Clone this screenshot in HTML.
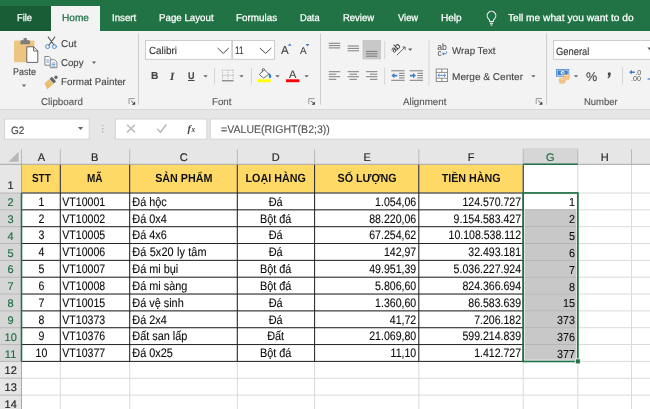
<!DOCTYPE html>
<html><head><meta charset="utf-8"><title>Excel</title>
<style>
html,body{margin:0;padding:0;}
body{width:650px;height:409px;overflow:hidden;position:relative;background:#e6e6e6;font-family:"Liberation Sans",sans-serif;}
.abs{position:absolute;}
.t{position:absolute;white-space:nowrap;color:#262626;line-height:1;z-index:3;-webkit-text-stroke:0.12px currentColor;}
.ui{font-size:10.5px;color:#262626;}
.cell{transform:rotate(0.03deg);position:absolute;white-space:nowrap;font-size:12.3px;color:#0c0c0c;-webkit-text-stroke:0.12px #0c0c0c;line-height:1;}
.hd{position:absolute;white-space:nowrap;font-size:11.8px;font-weight:bold;color:#111;text-align:center;line-height:1;}
.ch{transform:rotate(0.03deg);position:absolute;white-space:nowrap;font-size:11px;color:#222;-webkit-text-stroke:0.15px currentColor;text-align:center;line-height:1;}
.rh{transform:rotate(0.03deg);position:absolute;white-space:nowrap;font-size:11px;letter-spacing:0.2px;color:#222;-webkit-text-stroke:0.15px currentColor;text-align:center;line-height:1;}
svg{position:absolute;left:0;top:0;will-change:transform;}
</style></head><body>

<div class="abs" style="left:0;top:0;width:650px;height:31px;background:#217346"></div>
<div class="abs" style="left:0;top:30.8px;width:650px;height:77.8px;background:#f3f3f3"></div>
<div class="abs" style="left:0;top:108.6px;width:650px;height:1.1px;background:#d8d8d8"></div>
<div class="abs" style="left:0;top:5.6px;width:51px;height:25.4px;background:#185d36"></div>
<div class="abs" style="left:50.8px;top:5.6px;width:48.8px;height:26px;background:#f3f3f3"></div>
<svg width="650" height="150" viewBox="0 0 650 150">
<path d="M138.5 33.5 V104.8" stroke="#cdcdcd" stroke-width="1"/>
<path d="M320.5 33.5 V104.8" stroke="#cdcdcd" stroke-width="1"/>
<path d="M546.6 33.5 V104.8" stroke="#cdcdcd" stroke-width="1"/>
<path d="M214.5 68 V84.5" stroke="#d4d4d4" stroke-width="1"/>
<path d="M251.4 68 V84.5" stroke="#d4d4d4" stroke-width="1"/>
<path d="M384.7 67.5 V84.5" stroke="#d4d4d4" stroke-width="1"/>
<path d="M384.7 41 V59" stroke="#d4d4d4" stroke-width="1"/>
<path d="M429 40.5 V85" stroke="#d4d4d4" stroke-width="1"/>
<path d="M622.5 67 V84.5" stroke="#d4d4d4" stroke-width="1"/>
<rect x="14" y="40.5" width="20.5" height="21.8" rx="1.2" fill="#ecc583"/>
<path d="M20.5 44.2 v-3 q0 -1 1 -1 h2 v-1.2 q0 -1 1 -1 h1.4 q1 0 1 1 v1.2 h2 q1 0 1 1 v3 z" fill="#7d7d7d"/>
<path d="M26.8 46.8 h6.8 l4.2 4.2 v11.4 h-11 z" fill="#fff" stroke="#555" stroke-width="0.9"/>
<path d="M33.6 46.8 v4.2 h4.2" fill="none" stroke="#555" stroke-width="0.9"/>
<path d="M21.8 84.6 h4.4 l-2.2 2.4 z" fill="#666"/>
<g fill="none" stroke-linecap="round"><path d="M48.2 37 L54 45 M54.8 37 L49 45" stroke="#5c5c5c" stroke-width="1.2"/><circle cx="47.6" cy="46.6" r="2" stroke="#4a8ad0" stroke-width="0.95"/><circle cx="54.4" cy="46.6" r="2" stroke="#4a8ad0" stroke-width="0.95"/></g>
<g fill="#fff" stroke="#6e6e6e" stroke-width="0.85"><path d="M44.9 56.5 h4 l1.8 1.8 v6.9 h-5.8 z"/><path d="M50.2 59.8 h4.4 l2.3 2.3 v5.6 h-6.7 z"/></g>
<path d="M46.2 60 h2.8 M46.2 62 h2.8 M51.6 63 h3.8 M51.6 64.6 h3.8 M51.6 66.1 h3.8" stroke="#4a8ad0" stroke-width="0.8"/>
<path d="M91.8 61.6 h4.4 l-2.2 2.4 z" fill="#666"/>
<g transform="translate(46.5 85.8) rotate(-42)"><path d="M0.4 -3.2 L6.2 -3.2 L6.2 3.2 L-2 3.2 Z" fill="#ecbd6c"/><rect x="6.7" y="-3.1" width="3.3" height="6.2" rx="0.4" fill="#666"/><rect x="11.2" y="-1.5" width="3" height="3" rx="0.4" fill="#666"/></g>
<path d="M129.0 103.9 V98.6 H134.6" fill="none" stroke="#8c8c8c" stroke-width="0.9"/>
<path d="M131.2 100.8 L133.6 103.2" stroke="#3a3a3a" stroke-width="0.9"/>
<path d="M135.1 104.8 v-3.3 l-3.3 3.3 z" fill="#3a3a3a"/>
<rect x="145.5" y="40.5" width="86.3" height="18.8" fill="#fff" stroke="#c8c8c8" stroke-width="0.9"/>
<rect x="232.6" y="40.5" width="42" height="18.8" fill="#fff" stroke="#c8c8c8" stroke-width="0.9"/>
<path d="M217.6 48 l5.6 5.4 l5.6 -5.4 M259.8 48 l5.8 5.4 l5.8 -5.4" fill="none" stroke="#484848" stroke-width="1"/>
<path d="M287.8 45.8 l1.9 -2.4 l1.9 2.4 z" fill="#3c7bc8"/>
<path d="M305.6 44 l1.9 2.4 l1.9 -2.4 z" fill="#3c7bc8"/>
<path d="M203.3 75.2 h4.4 l-2.2 2.4 z" fill="#666"/>
<g stroke="#9a9a9a" stroke-width="0.8" stroke-dasharray="0.9 1.1" fill="none"><path d="M222.4 70.2 h11 M222.4 75.3 h11 M222.6 70.2 v10 M227.9 70.2 v10 M233.2 70.2 v10"/></g>
<path d="M222 80.8 h11.6" stroke="#555" stroke-width="0.9"/>
<path d="M239.3 75.2 h4.4 l-2.2 2.4 z" fill="#666"/>
<g fill="none" stroke="#555" stroke-width="0.85" stroke-linejoin="round"><path d="M259.3 74.5 L264.4 69.9 L268.9 74.2 L263.6 78.1 Z" fill="#fff"/><path d="M262.3 71.8 v-1.8 q0 -1.5 1.1 -1.5 q1.1 0 1.1 1.5 v0.4"/></g>
<path d="M268.4 72.4 q3 1.8 2.8 4.6 q-0.2 1.2 -1.2 1.2 q-1 0 -1 -1.2 q0 -1.4 -.6 -4.6z" fill="#3c7bc8"/>
<rect x="257.4" y="79.3" width="13.4" height="2.9" fill="#ffff00"/>
<path d="M275.3 75.2 h4.4 l-2.2 2.4 z" fill="#666"/>
<rect x="286" y="79.3" width="13.4" height="2.9" fill="#ff0000"/>
<path d="M304.4 75.2 h4.4 l-2.2 2.4 z" fill="#666"/>
<path d="M308.79999999999995 103.9 V98.6 H314.4" fill="none" stroke="#8c8c8c" stroke-width="0.9"/>
<path d="M311.0 100.8 L313.4 103.2" stroke="#3a3a3a" stroke-width="0.9"/>
<path d="M314.9 104.8 v-3.3 l-3.3 3.3 z" fill="#3a3a3a"/>
<rect x="362.5" y="40" width="18.5" height="19.4" fill="#c8c8c8"/>
<path d="M328.8 43.3 h11.4 M328.8 45.6 h11.4 M328.8 47.9 h11.4" stroke="#707070" stroke-width="0.9" fill="none"/>
<path d="M347.6 46 h11.4 M347.6 48.4 h11.4 M347.6 50.8 h11.4" stroke="#707070" stroke-width="0.9" fill="none"/>
<path d="M366 51.4 h11.4 M366 53.8 h11.4 M366 56.2 h11.4" stroke="#707070" stroke-width="0.9" fill="none"/>
<path d="M328.8 71.7 h11.4 M328.8 74.2 h7.5 M328.8 76.7 h11.4 M328.8 79.3 h7.5" stroke="#707070" stroke-width="0.9" fill="none"/>
<path d="M347.6 71.7 h11.4 M349.55 74.2 h7.5 M347.6 76.7 h11.4 M349.55 79.3 h7.5" stroke="#707070" stroke-width="0.9" fill="none"/>
<path d="M366.0 71.7 h11.4 M369.9 74.2 h7.5 M366.0 76.7 h11.4 M369.9 79.3 h7.5" stroke="#707070" stroke-width="0.9" fill="none"/>
<g transform="translate(395.6 48.4) rotate(-45)"><text x="-4.6" y="2.4" font-family="Liberation Sans" font-size="8.8" fill="#333" stroke="#333" stroke-width="0.15">ab</text></g>
<path d="M396.8 55.2 L405 47.2 M405.2 47 h-2.8 M405.2 47 v2.8" stroke="#555" stroke-width="0.85" fill="none"/>
<path d="M408.0 48.6 h4.4 l-2.2 2.4 z" fill="#666"/>
<path d="M391.2 70.8 h13.4 M399.0 73.3 h5.6 M399.0 75.6 h5.6 M399.0 77.9 h5.6 M391.2 80.3 h13.4" stroke="#707070" stroke-width="0.9" fill="none"/>
<path d="M391.4 75.6 l2.9 -2.7 v1.9 h3 v1.6 h-3 v1.9 z" fill="#3c7bc8"/>
<path d="M409.6 70.8 h13.4 M417.4 73.3 h5.6 M417.4 75.6 h5.6 M417.4 77.9 h5.6 M409.6 80.3 h13.4" stroke="#707070" stroke-width="0.9" fill="none"/>
<path d="M415.9 75.6 l-2.9 -2.7 v1.9 h-3 v1.6 h3 v1.9 z" fill="#3c7bc8"/>
<text x="437.2" y="49.6" font-family="Liberation Sans" font-size="8.8" fill="#444" textLength="9.6" lengthAdjust="spacingAndGlyphs">ab</text>
<text x="437.4" y="55.6" font-family="Liberation Sans" font-size="8.4" fill="#444">c</text>
<path d="M446.6 51.4 v1 q0 1.4 -1.4 1.4 h-1.6" fill="none" stroke="#3c7bc8" stroke-width="0.9"/><path d="M442 53.8 l1.9 -1.6 v3.2 z" fill="#3c7bc8"/>
<g fill="#fff" stroke="#7a7a7a" stroke-width="0.85"><rect x="436.2" y="69" width="11.2" height="12.6"/><path d="M436.2 72.4 h11.2 M436.2 78.2 h11.2 M441.8 69 v3.4 M441.8 78.2 v3.4" fill="none"/></g>
<path d="M438 75.3 h7.6 M439.5 73.8 l-1.6 1.5 l1.6 1.5 M444.1 73.8 l1.6 1.5 l-1.6 1.5" stroke="#3c7bc8" stroke-width="0.9" fill="none"/>
<path d="M531.2 75.2 h4.4 l-2.2 2.4 z" fill="#666"/>
<path d="M536.1999999999999 103.9 V98.6 H541.8" fill="none" stroke="#8c8c8c" stroke-width="0.9"/>
<path d="M538.4 100.8 L540.8 103.2" stroke="#3a3a3a" stroke-width="0.9"/>
<path d="M542.3 104.8 v-3.3 l-3.3 3.3 z" fill="#3a3a3a"/>
<rect x="553.6" y="40.5" width="100" height="18.8" fill="#fff" stroke="#c8c8c8" stroke-width="0.9"/>
<path d="M647.4 47.6 h4.4 l-2.2 2.4 z" fill="#555"/>
<rect x="556" y="69" width="13.2" height="7.6" fill="#3f7fcf"/><rect x="557.1" y="70.1" width="11" height="5.4" fill="none" stroke="#fff" stroke-width="0.6"/><ellipse cx="562.6" cy="72.8" rx="2" ry="1.7" fill="#fff"/><circle cx="562.9" cy="72.8" r="0.9" fill="#3f7fcf"/>
<g fill="#f9d9a8" stroke="#eca458" stroke-width="0.55"><ellipse cx="566.4" cy="78.6" rx="3.2" ry="1.15"/><ellipse cx="566.4" cy="77.1" rx="3.2" ry="1.15"/><ellipse cx="566.4" cy="75.6" rx="3.2" ry="1.15"/><ellipse cx="562.2" cy="82.2" rx="3.2" ry="1.15"/><ellipse cx="562.2" cy="80.7" rx="3.2" ry="1.15"/><ellipse cx="562.2" cy="79.2" rx="3.2" ry="1.15"/></g>
<path d="M573.8 75.2 h4.4 l-2.2 2.4 z" fill="#666"/>
<path d="M607.9 72.6 h2.7 v2.5 q0 2.3 -2.6 3.3 l-0.5 -0.8 q1.2 -0.7 1.3 -2 h-0.9 z" fill="#444"/>
<path d="M629.2 72.2 l2.6 -2.4 v1.7 h3 v1.4 h-3 v1.7 z" fill="#3c7bc8"/>
<text x="635.2" y="75.2" font-family="Liberation Sans" font-size="7.2" fill="#555">.0</text>
<text x="631" y="81" font-family="Liberation Sans" font-size="7.2" fill="#555">.00</text>
<path d="M647.6 79 h4" stroke="#3c7bc8" stroke-width="1.2"/>
<g fill="none" stroke="#fff" stroke-width="1.05"><path d="M489.8 21.5 q0 -1.6 -1.5 -2.9 a4.35 4.35 0 1 1 6.4 0 q-1.5 1.3 -1.5 2.9 z"/><path d="M489.9 23.3 h3.2 M490.4 24.9 h2.2"/></g>
<rect x="4.6" y="119" width="84.6" height="20.1" fill="#fff" stroke="#d0d0d0" stroke-width="0.9"/>
<rect x="115.3" y="119" width="91.6" height="20.1" fill="#fff" stroke="#d0d0d0" stroke-width="0.9"/>
<rect x="210.2" y="119" width="445" height="20.1" fill="#fff" stroke="#d0d0d0" stroke-width="0.9"/>
<path d="M77.9 127 h5.4 l-2.7 3 z" fill="#666"/>
<g fill="#a0a0a0"><circle cx="102.7" cy="125.6" r="0.7"/><circle cx="102.7" cy="128.8" r="0.7"/><circle cx="102.7" cy="132" r="0.7"/></g>
<path d="M127 124.8 l8 7.6 M135 124.8 l-8 7.6" stroke="#bcbcbc" stroke-width="1.5" fill="none"/>
<path d="M157.2 128.8 l3.2 3.4 l6 -7.8" stroke="#bcbcbc" stroke-width="1.6" fill="none"/>
<text x="187.6" y="132" font-family="Liberation Serif" font-style="italic" font-weight="bold" font-size="10.6" fill="#444">f</text><text x="191.4" y="132" font-family="Liberation Serif" font-style="italic" font-weight="bold" font-size="7.4" fill="#444">x</text>
</svg>
<svg width="650" height="409" viewBox="0 0 650 409">
<rect x="21.5" y="164.3" width="628.5" height="244.7" fill="#fff"/>
<rect x="0" y="148.2" width="650" height="16.100000000000023" fill="#e6e6e6"/>
<rect x="0" y="164.3" width="21.5" height="244.7" fill="#e6e6e6"/>
<rect x="21.5" y="164.3" width="501.70000000000005" height="28.69999999999999" fill="#ffd966"/>
<rect x="523.2" y="148.2" width="54.59999999999991" height="16.100000000000023" fill="#d6d6d6"/>
<rect x="0" y="193.0" width="21.5" height="168.39999999999998" fill="#d6d6d6"/>
<rect x="523.2" y="209.84" width="54.59999999999991" height="151.55999999999997" fill="#c8c8c8"/>
<path d="M21.5 164.3 V409 M60.3 164.3 V409 M129.7 164.3 V409 M237.3 164.3 V409 M314.6 164.3 V409 M418.8 164.3 V409 M523.2 164.3 V409 M577.8 164.3 V409 M631.5 164.3 V409 M21.5 193.0 H650 M21.5 209.84 H650 M21.5 226.68 H650 M21.5 243.51999999999998 H650 M21.5 260.36 H650 M21.5 277.2 H650 M21.5 294.03999999999996 H650 M21.5 310.88 H650 M21.5 327.72 H650 M21.5 344.56 H650 M21.5 361.4 H650 M21.5 378.24 H650 M21.5 395.08 H650 M21.5 411.91999999999996 H650" stroke="#dadada" stroke-width="1" fill="none"/>
<path d="M523.2 209.84 H577.8 M523.2 226.68 H577.8 M523.2 243.51999999999998 H577.8 M523.2 260.36 H577.8 M523.2 277.2 H577.8 M523.2 294.03999999999996 H577.8 M523.2 310.88 H577.8 M523.2 327.72 H577.8 M523.2 344.56 H577.8" stroke="#b2b2b2" stroke-width="1" fill="none"/>
<path d="M21.5 149.2 V164.3 M60.3 149.2 V164.3 M129.7 149.2 V164.3 M237.3 149.2 V164.3 M314.6 149.2 V164.3 M418.8 149.2 V164.3 M523.2 149.2 V164.3 M577.8 149.2 V164.3 M631.5 149.2 V164.3 M0 193.0 H21.5 M0 209.84 H21.5 M0 226.68 H21.5 M0 243.51999999999998 H21.5 M0 260.36 H21.5 M0 277.2 H21.5 M0 294.03999999999996 H21.5 M0 310.88 H21.5 M0 327.72 H21.5 M0 344.56 H21.5 M0 361.4 H21.5 M0 378.24 H21.5 M0 395.08 H21.5 M0 411.91999999999996 H21.5" stroke="#b8b8b8" stroke-width="1" fill="none"/>
<path d="M0 164.3 H650 M21.5 164.3 V409" stroke="#a8a8a8" stroke-width="1" fill="none"/>
<path d="M60.3 164.8 V361.4 M129.7 164.8 V361.4 M237.3 164.8 V361.4 M314.6 164.8 V361.4 M418.8 164.8 V361.4 M523.2 164.8 V361.4 M21.5 193.0 H523.2 M21.5 209.84 H523.2 M21.5 226.68 H523.2 M21.5 243.51999999999998 H523.2 M21.5 260.36 H523.2 M21.5 277.2 H523.2 M21.5 294.03999999999996 H523.2 M21.5 310.88 H523.2 M21.5 327.72 H523.2 M21.5 344.56 H523.2 M21.5 361.4 H523.2" stroke="#222" stroke-width="1" fill="none"/>
<path d="M21.5 193.0 V361.4" stroke="#217346" stroke-width="1.6" fill="none"/>
<path d="M523.2 164.3 H577.8" stroke="#217346" stroke-width="1.6" fill="none"/>
<rect x="523.2" y="193.0" width="54.59999999999991" height="168.39999999999998" fill="none" stroke="#217346" stroke-width="1.8"/>
<rect x="524.5" y="194.3" width="51.99999999999991" height="165.79999999999998" fill="none" stroke="#fff" stroke-opacity="0.75" stroke-width="0.8"/>
<rect x="575.3" y="358.9" width="5" height="5" fill="#217346" stroke="#fff" stroke-width="0.8"/>
<path d="M18.6 151.79999999999998 V161.70000000000002 H8.4 Z" fill="#b8b8b8"/>
</svg>
<div style="position:absolute;left:0;top:0;width:650px;height:409px;will-change:transform;z-index:5">
<div class="t" style="left:17px;top:13.23px;font-size:10px;color:#fff;transform-origin:0 50%;transform:rotate(0.03deg) scaleX(0.931);-webkit-text-stroke:0.25px currentColor;">File</div>
<div class="t" style="left:61.5px;top:13.23px;font-size:10px;color:#217346;transform-origin:0 50%;transform:rotate(0.03deg) scaleX(1.012);-webkit-text-stroke:0.25px currentColor;">Home</div>
<div class="t" style="left:111.9px;top:13.23px;font-size:10px;color:#fff;transform-origin:0 50%;transform:rotate(0.03deg) scaleX(0.972);-webkit-text-stroke:0.25px currentColor;">Insert</div>
<div class="t" style="left:159.2px;top:13.23px;font-size:10px;color:#fff;transform-origin:0 50%;transform:rotate(0.03deg) scaleX(0.972);-webkit-text-stroke:0.25px currentColor;">Page Layout</div>
<div class="t" style="left:236.2px;top:13.23px;font-size:10px;color:#fff;transform-origin:0 50%;transform:rotate(0.03deg) scaleX(0.986);-webkit-text-stroke:0.25px currentColor;">Formulas</div>
<div class="t" style="left:300.4px;top:13.23px;font-size:10px;color:#fff;transform-origin:0 50%;transform:rotate(0.03deg) scaleX(0.928);-webkit-text-stroke:0.25px currentColor;">Data</div>
<div class="t" style="left:343.3px;top:13.23px;font-size:10px;color:#fff;transform-origin:0 50%;transform:rotate(0.03deg) scaleX(0.945);-webkit-text-stroke:0.25px currentColor;">Review</div>
<div class="t" style="left:397.5px;top:13.23px;font-size:10px;color:#fff;transform-origin:0 50%;transform:rotate(0.03deg) scaleX(0.935);-webkit-text-stroke:0.25px currentColor;">View</div>
<div class="t" style="left:440.8px;top:13.23px;font-size:10px;color:#fff;transform-origin:0 50%;transform:rotate(0.03deg) scaleX(1.006);-webkit-text-stroke:0.25px currentColor;">Help</div>
<div class="t" style="left:508.2px;top:13.23px;font-size:10px;color:#fff;transform-origin:0 50%;transform:rotate(0.03deg) scaleX(1.018);-webkit-text-stroke:0.25px currentColor;">Tell me what you want to do</div>
<div class="t" style="left:13px;top:67.32px;font-size:9.9px;color:#444;transform-origin:0 50%;transform:rotate(0.03deg) scaleX(0.909);">Paste</div>
<div class="t" style="left:61px;top:38.82px;font-size:9.9px;color:#444;transform-origin:0 50%;transform:rotate(0.03deg) scaleX(1.006);">Cut</div>
<div class="t" style="left:61px;top:58.22px;font-size:9.9px;color:#444;transform-origin:0 50%;transform:rotate(0.03deg) scaleX(0.978);">Copy</div>
<div class="t" style="left:61px;top:77.22px;font-size:9.9px;color:#444;transform-origin:0 50%;transform:rotate(0.03deg) scaleX(0.993);">Format Painter</div>
<div class="t" style="left:41px;top:97.02px;font-size:9.9px;color:#555;transform-origin:0 50%;transform:rotate(0.03deg) scaleX(0.991);">Clipboard</div>
<div class="t" style="left:148.5px;top:45.6px;font-size:10.4px;color:#333;transform-origin:0 50%;transform:rotate(0.03deg) scaleX(0.947);">Calibri</div>
<div class="t" style="left:235.2px;top:45.26px;font-size:10.8px;color:#333;transform-origin:0 50%;transform:rotate(0.03deg) scaleX(0.749);">11</div>
<div class="t" style="left:211.5px;top:96.72px;font-size:9.9px;color:#555;transform-origin:0 50%;transform:rotate(0.03deg) scaleX(0.984);">Font</div>
<div class="t" style="left:451.6px;top:45.62px;font-size:9.9px;color:#444;transform-origin:0 50%;transform:rotate(0.03deg) scaleX(0.986);">Wrap Text</div>
<div class="t" style="left:451.6px;top:71.62px;font-size:9.9px;color:#444;transform-origin:0 50%;transform:rotate(0.03deg) scaleX(1.019);">Merge &amp; Center</div>
<div class="t" style="left:403.2px;top:97.02px;font-size:9.9px;color:#555;transform-origin:0 50%;transform:rotate(0.03deg) scaleX(0.988);">Alignment</div>
<div class="t" style="left:556.3px;top:45.61px;font-size:10.5px;color:#333;transform-origin:0 50%;transform:rotate(0.03deg) scaleX(0.891);">General</div>
<div class="t" style="left:584px;top:96.82px;font-size:9.9px;color:#555;transform-origin:0 50%;transform:rotate(0.03deg) scaleX(0.960);">Number</div>
<div class="t" style="left:150.8px;top:70.57px;font-size:10.2px;color:#444;transform-origin:0 50%;transform:rotate(0.03deg);font-weight:bold;">B</div>
<div class="t" style="left:170px;top:70.57px;font-size:10.2px;color:#444;transform-origin:0 50%;transform:rotate(0.03deg);font-style:italic;font-weight:bold;font-family:'Liberation Serif',serif;font-size:11px;">I</div>
<div class="t" style="left:187.9px;top:70.7px;font-size:9.8px;color:#444;transform-origin:0 50%;transform:rotate(0.03deg);font-weight:bold;text-decoration:underline;text-underline-offset:1px;text-decoration-thickness:0.9px;transform:rotate(0.03deg) scaleX(0.92);">U</div>
<div class="t" style="left:280.6px;top:44.87px;font-size:11.5px;color:#444;transform-origin:0 50%;transform:rotate(0.03deg);">A</div>
<div class="t" style="left:299.5px;top:46.22px;font-size:9.9px;color:#444;transform-origin:0 50%;transform:rotate(0.03deg);">A</div>
<div class="t" style="left:288.6px;top:69.49px;font-size:11px;color:#444;transform-origin:0 50%;transform:rotate(0.03deg);">A</div>
<div class="t" style="left:586.3px;top:70.93px;font-size:12.6px;color:#444;transform-origin:0 50%;transform:rotate(0.03deg);">%</div>
<div class="t" style="left:10.6px;top:124.63px;font-size:10.6px;color:#444;transform-origin:0 50%;transform:rotate(0.03deg) scaleX(0.948);">G2</div>
<div class="t" style="left:220.6px;top:124.12px;font-size:11.2px;color:#555;transform-origin:0 50%;transform:rotate(0.03deg) scaleX(0.946);">=VALUE(RIGHT(B2;3))</div>
<div class="ch" style="left:21.5px;width:38.8px;top:152.39999999999998px;color:#222">A</div>
<div class="ch" style="left:60.3px;width:69.39999999999999px;top:152.39999999999998px;color:#222">B</div>
<div class="ch" style="left:129.7px;width:107.60000000000002px;top:152.39999999999998px;color:#222">C</div>
<div class="ch" style="left:237.3px;width:77.30000000000001px;top:152.39999999999998px;color:#222">D</div>
<div class="ch" style="left:314.6px;width:104.19999999999999px;top:152.39999999999998px;color:#222">E</div>
<div class="ch" style="left:418.8px;width:104.40000000000003px;top:152.39999999999998px;color:#222">F</div>
<div class="ch" style="left:523.2px;width:54.59999999999991px;top:152.39999999999998px;color:#1e6e42">G</div>
<div class="ch" style="left:577.8px;width:53.700000000000045px;top:152.39999999999998px;color:#222">H</div>
<div class="rh" style="left:0;width:21.5px;top:180.2px;color:#222">1</div>
<div class="rh" style="left:0;width:21.5px;top:197.04px;color:#1e6e42">2</div>
<div class="rh" style="left:0;width:21.5px;top:213.88px;color:#1e6e42">3</div>
<div class="rh" style="left:0;width:21.5px;top:230.71999999999997px;color:#1e6e42">4</div>
<div class="rh" style="left:0;width:21.5px;top:247.56px;color:#1e6e42">5</div>
<div class="rh" style="left:0;width:21.5px;top:264.4px;color:#1e6e42">6</div>
<div class="rh" style="left:0;width:21.5px;top:281.23999999999995px;color:#1e6e42">7</div>
<div class="rh" style="left:0;width:21.5px;top:298.08px;color:#1e6e42">8</div>
<div class="rh" style="left:0;width:21.5px;top:314.92px;color:#1e6e42">9</div>
<div class="rh" style="left:0;width:21.5px;top:331.76px;color:#1e6e42">10</div>
<div class="rh" style="left:0;width:21.5px;top:348.59999999999997px;color:#1e6e42">11</div>
<div class="rh" style="left:0;width:21.5px;top:365.44px;color:#222">12</div>
<div class="rh" style="left:0;width:21.5px;top:382.28px;color:#222">13</div>
<div class="rh" style="left:0;width:21.5px;top:399.11999999999995px;color:#222">14</div>
<div class="hd" style="left:21.5px;width:38.8px;top:173.20000000000002px;transform:rotate(0.03deg) scaleX(0.85)">STT</div>
<div class="hd" style="left:60.3px;width:69.39999999999999px;top:173.20000000000002px;transform:rotate(0.03deg) scaleX(0.85)">MÃ</div>
<div class="hd" style="left:129.7px;width:107.60000000000002px;top:173.20000000000002px;transform:rotate(0.03deg) scaleX(0.91)">SẢN PHẨM</div>
<div class="hd" style="left:237.3px;width:77.30000000000001px;top:173.20000000000002px;transform:rotate(0.03deg) scaleX(0.91)">LOẠI HÀNG</div>
<div class="hd" style="left:314.6px;width:104.19999999999999px;top:173.20000000000002px;transform:rotate(0.03deg) scaleX(0.91)">SỐ LƯỢNG</div>
<div class="hd" style="left:418.8px;width:104.40000000000003px;top:173.20000000000002px;transform:rotate(0.03deg) scaleX(0.91)">TIỀN HÀNG</div>
<div class="cell" style="left:21.5px;width:38.8px;top:195.7px;text-align:center;box-sizing:border-box;transform-origin:50% 50%;transform:rotate(0.03deg) scaleX(0.858);">1</div>
<div class="cell" style="left:60.3px;width:69.4px;top:195.7px;text-align:left;box-sizing:border-box;padding-left:2.68px;transform-origin:0 50%;transform:rotate(0.03deg) scaleX(0.858);">VT10001</div>
<div class="cell" style="left:129.7px;width:107.6px;top:195.7px;text-align:left;box-sizing:border-box;padding-left:2.6px;transform-origin:0 50%;transform:rotate(0.03deg) scaleX(0.885);">Đá hộc</div>
<div class="cell" style="left:237.3px;width:77.3px;top:195.7px;text-align:center;box-sizing:border-box;transform-origin:50% 50%;transform:rotate(0.03deg) scaleX(0.885);">Đá</div>
<div class="cell" style="left:314.6px;width:104.2px;top:195.7px;text-align:right;box-sizing:border-box;padding-right:3.5px;transform-origin:100% 50%;transform:rotate(0.03deg) scaleX(0.858);">1.054,06</div>
<div class="cell" style="left:418.8px;width:104.4px;top:195.7px;text-align:right;box-sizing:border-box;padding-right:2.68px;transform-origin:100% 50%;transform:rotate(0.03deg) scaleX(0.858);">124.570.727</div>
<div class="cell" style="left:523.2px;width:54.6px;top:195.7px;text-align:right;box-sizing:border-box;padding-right:2.68px;font-size:11.6px;padding-right:2.8px;top:196.4px;-webkit-text-stroke:0.1px #111;transform-origin:100% 50%;transform:rotate(0.03deg) scaleX(0.93);">1</div>
<div class="cell" style="left:21.5px;width:38.8px;top:212.54px;text-align:center;box-sizing:border-box;transform-origin:50% 50%;transform:rotate(0.03deg) scaleX(0.858);">2</div>
<div class="cell" style="left:60.3px;width:69.4px;top:212.54px;text-align:left;box-sizing:border-box;padding-left:2.68px;transform-origin:0 50%;transform:rotate(0.03deg) scaleX(0.858);">VT10002</div>
<div class="cell" style="left:129.7px;width:107.6px;top:212.54px;text-align:left;box-sizing:border-box;padding-left:2.6px;transform-origin:0 50%;transform:rotate(0.03deg) scaleX(0.885);">Đá 0x4</div>
<div class="cell" style="left:237.3px;width:77.3px;top:212.54px;text-align:center;box-sizing:border-box;transform-origin:50% 50%;transform:rotate(0.03deg) scaleX(0.885);">Bột đá</div>
<div class="cell" style="left:314.6px;width:104.2px;top:212.54px;text-align:right;box-sizing:border-box;padding-right:3.5px;transform-origin:100% 50%;transform:rotate(0.03deg) scaleX(0.858);">88.220,06</div>
<div class="cell" style="left:418.8px;width:104.4px;top:212.54px;text-align:right;box-sizing:border-box;padding-right:2.68px;transform-origin:100% 50%;transform:rotate(0.03deg) scaleX(0.858);">9.154.583.427</div>
<div class="cell" style="left:523.2px;width:54.6px;top:212.54px;text-align:right;box-sizing:border-box;padding-right:2.68px;font-size:11.6px;padding-right:2.8px;top:213.24px;-webkit-text-stroke:0.1px #111;transform-origin:100% 50%;transform:rotate(0.03deg) scaleX(0.93);">2</div>
<div class="cell" style="left:21.5px;width:38.8px;top:229.38px;text-align:center;box-sizing:border-box;transform-origin:50% 50%;transform:rotate(0.03deg) scaleX(0.858);">3</div>
<div class="cell" style="left:60.3px;width:69.4px;top:229.38px;text-align:left;box-sizing:border-box;padding-left:2.68px;transform-origin:0 50%;transform:rotate(0.03deg) scaleX(0.858);">VT10005</div>
<div class="cell" style="left:129.7px;width:107.6px;top:229.38px;text-align:left;box-sizing:border-box;padding-left:2.6px;transform-origin:0 50%;transform:rotate(0.03deg) scaleX(0.885);">Đá 4x6</div>
<div class="cell" style="left:237.3px;width:77.3px;top:229.38px;text-align:center;box-sizing:border-box;transform-origin:50% 50%;transform:rotate(0.03deg) scaleX(0.885);">Đá</div>
<div class="cell" style="left:314.6px;width:104.2px;top:229.38px;text-align:right;box-sizing:border-box;padding-right:3.5px;transform-origin:100% 50%;transform:rotate(0.03deg) scaleX(0.858);">67.254,62</div>
<div class="cell" style="left:418.8px;width:104.4px;top:229.38px;text-align:right;box-sizing:border-box;padding-right:2.68px;transform-origin:100% 50%;transform:rotate(0.03deg) scaleX(0.858);">10.108.538.112</div>
<div class="cell" style="left:523.2px;width:54.6px;top:229.38px;text-align:right;box-sizing:border-box;padding-right:2.68px;font-size:11.6px;padding-right:2.8px;top:230.08px;-webkit-text-stroke:0.1px #111;transform-origin:100% 50%;transform:rotate(0.03deg) scaleX(0.93);">5</div>
<div class="cell" style="left:21.5px;width:38.8px;top:246.22px;text-align:center;box-sizing:border-box;transform-origin:50% 50%;transform:rotate(0.03deg) scaleX(0.858);">4</div>
<div class="cell" style="left:60.3px;width:69.4px;top:246.22px;text-align:left;box-sizing:border-box;padding-left:2.68px;transform-origin:0 50%;transform:rotate(0.03deg) scaleX(0.858);">VT10006</div>
<div class="cell" style="left:129.7px;width:107.6px;top:246.22px;text-align:left;box-sizing:border-box;padding-left:2.6px;letter-spacing:0.15px;transform-origin:0 50%;transform:rotate(0.03deg) scaleX(0.885);">Đá 5x20 ly tâm</div>
<div class="cell" style="left:237.3px;width:77.3px;top:246.22px;text-align:center;box-sizing:border-box;transform-origin:50% 50%;transform:rotate(0.03deg) scaleX(0.885);">Đá</div>
<div class="cell" style="left:314.6px;width:104.2px;top:246.22px;text-align:right;box-sizing:border-box;padding-right:3.5px;transform-origin:100% 50%;transform:rotate(0.03deg) scaleX(0.858);">142,97</div>
<div class="cell" style="left:418.8px;width:104.4px;top:246.22px;text-align:right;box-sizing:border-box;padding-right:2.68px;transform-origin:100% 50%;transform:rotate(0.03deg) scaleX(0.858);">32.493.181</div>
<div class="cell" style="left:523.2px;width:54.6px;top:246.22px;text-align:right;box-sizing:border-box;padding-right:2.68px;font-size:11.6px;padding-right:2.8px;top:246.92px;-webkit-text-stroke:0.1px #111;transform-origin:100% 50%;transform:rotate(0.03deg) scaleX(0.93);">6</div>
<div class="cell" style="left:21.5px;width:38.8px;top:263.06px;text-align:center;box-sizing:border-box;transform-origin:50% 50%;transform:rotate(0.03deg) scaleX(0.858);">5</div>
<div class="cell" style="left:60.3px;width:69.4px;top:263.06px;text-align:left;box-sizing:border-box;padding-left:2.68px;transform-origin:0 50%;transform:rotate(0.03deg) scaleX(0.858);">VT10007</div>
<div class="cell" style="left:129.7px;width:107.6px;top:263.06px;text-align:left;box-sizing:border-box;padding-left:2.6px;transform-origin:0 50%;transform:rotate(0.03deg) scaleX(0.885);">Đá mi bụi</div>
<div class="cell" style="left:237.3px;width:77.3px;top:263.06px;text-align:center;box-sizing:border-box;transform-origin:50% 50%;transform:rotate(0.03deg) scaleX(0.885);">Bột đá</div>
<div class="cell" style="left:314.6px;width:104.2px;top:263.06px;text-align:right;box-sizing:border-box;padding-right:3.5px;transform-origin:100% 50%;transform:rotate(0.03deg) scaleX(0.858);">49.951,39</div>
<div class="cell" style="left:418.8px;width:104.4px;top:263.06px;text-align:right;box-sizing:border-box;padding-right:2.68px;transform-origin:100% 50%;transform:rotate(0.03deg) scaleX(0.858);">5.036.227.924</div>
<div class="cell" style="left:523.2px;width:54.6px;top:263.06px;text-align:right;box-sizing:border-box;padding-right:2.68px;font-size:11.6px;padding-right:2.8px;top:263.76px;-webkit-text-stroke:0.1px #111;transform-origin:100% 50%;transform:rotate(0.03deg) scaleX(0.93);">7</div>
<div class="cell" style="left:21.5px;width:38.8px;top:279.9px;text-align:center;box-sizing:border-box;transform-origin:50% 50%;transform:rotate(0.03deg) scaleX(0.858);">6</div>
<div class="cell" style="left:60.3px;width:69.4px;top:279.9px;text-align:left;box-sizing:border-box;padding-left:2.68px;transform-origin:0 50%;transform:rotate(0.03deg) scaleX(0.858);">VT10008</div>
<div class="cell" style="left:129.7px;width:107.6px;top:279.9px;text-align:left;box-sizing:border-box;padding-left:2.6px;transform-origin:0 50%;transform:rotate(0.03deg) scaleX(0.885);">Đá mi sàng</div>
<div class="cell" style="left:237.3px;width:77.3px;top:279.9px;text-align:center;box-sizing:border-box;transform-origin:50% 50%;transform:rotate(0.03deg) scaleX(0.885);">Bột đá</div>
<div class="cell" style="left:314.6px;width:104.2px;top:279.9px;text-align:right;box-sizing:border-box;padding-right:3.5px;transform-origin:100% 50%;transform:rotate(0.03deg) scaleX(0.858);">5.806,60</div>
<div class="cell" style="left:418.8px;width:104.4px;top:279.9px;text-align:right;box-sizing:border-box;padding-right:2.68px;transform-origin:100% 50%;transform:rotate(0.03deg) scaleX(0.858);">824.366.694</div>
<div class="cell" style="left:523.2px;width:54.6px;top:279.9px;text-align:right;box-sizing:border-box;padding-right:2.68px;font-size:11.6px;padding-right:2.8px;top:280.6px;-webkit-text-stroke:0.1px #111;transform-origin:100% 50%;transform:rotate(0.03deg) scaleX(0.93);">8</div>
<div class="cell" style="left:21.5px;width:38.8px;top:296.74px;text-align:center;box-sizing:border-box;transform-origin:50% 50%;transform:rotate(0.03deg) scaleX(0.858);">7</div>
<div class="cell" style="left:60.3px;width:69.4px;top:296.74px;text-align:left;box-sizing:border-box;padding-left:2.68px;transform-origin:0 50%;transform:rotate(0.03deg) scaleX(0.858);">VT10015</div>
<div class="cell" style="left:129.7px;width:107.6px;top:296.74px;text-align:left;box-sizing:border-box;padding-left:2.6px;transform-origin:0 50%;transform:rotate(0.03deg) scaleX(0.885);">Đá vệ sinh</div>
<div class="cell" style="left:237.3px;width:77.3px;top:296.74px;text-align:center;box-sizing:border-box;transform-origin:50% 50%;transform:rotate(0.03deg) scaleX(0.885);">Đá</div>
<div class="cell" style="left:314.6px;width:104.2px;top:296.74px;text-align:right;box-sizing:border-box;padding-right:3.5px;transform-origin:100% 50%;transform:rotate(0.03deg) scaleX(0.858);">1.360,60</div>
<div class="cell" style="left:418.8px;width:104.4px;top:296.74px;text-align:right;box-sizing:border-box;padding-right:2.68px;transform-origin:100% 50%;transform:rotate(0.03deg) scaleX(0.858);">86.583.639</div>
<div class="cell" style="left:523.2px;width:54.6px;top:296.74px;text-align:right;box-sizing:border-box;padding-right:2.68px;font-size:11.6px;padding-right:2.8px;top:297.44px;-webkit-text-stroke:0.1px #111;transform-origin:100% 50%;transform:rotate(0.03deg) scaleX(0.93);">15</div>
<div class="cell" style="left:21.5px;width:38.8px;top:313.58px;text-align:center;box-sizing:border-box;transform-origin:50% 50%;transform:rotate(0.03deg) scaleX(0.858);">8</div>
<div class="cell" style="left:60.3px;width:69.4px;top:313.58px;text-align:left;box-sizing:border-box;padding-left:2.68px;transform-origin:0 50%;transform:rotate(0.03deg) scaleX(0.858);">VT10373</div>
<div class="cell" style="left:129.7px;width:107.6px;top:313.58px;text-align:left;box-sizing:border-box;padding-left:2.6px;transform-origin:0 50%;transform:rotate(0.03deg) scaleX(0.885);">Đá 2x4</div>
<div class="cell" style="left:237.3px;width:77.3px;top:313.58px;text-align:center;box-sizing:border-box;transform-origin:50% 50%;transform:rotate(0.03deg) scaleX(0.885);">Đá</div>
<div class="cell" style="left:314.6px;width:104.2px;top:313.58px;text-align:right;box-sizing:border-box;padding-right:3.5px;transform-origin:100% 50%;transform:rotate(0.03deg) scaleX(0.858);">41,72</div>
<div class="cell" style="left:418.8px;width:104.4px;top:313.58px;text-align:right;box-sizing:border-box;padding-right:2.68px;transform-origin:100% 50%;transform:rotate(0.03deg) scaleX(0.858);">7.206.182</div>
<div class="cell" style="left:523.2px;width:54.6px;top:313.58px;text-align:right;box-sizing:border-box;padding-right:2.68px;font-size:11.6px;padding-right:2.8px;top:314.28px;-webkit-text-stroke:0.1px #111;transform-origin:100% 50%;transform:rotate(0.03deg) scaleX(0.93);">373</div>
<div class="cell" style="left:21.5px;width:38.8px;top:330.42px;text-align:center;box-sizing:border-box;transform-origin:50% 50%;transform:rotate(0.03deg) scaleX(0.858);">9</div>
<div class="cell" style="left:60.3px;width:69.4px;top:330.42px;text-align:left;box-sizing:border-box;padding-left:2.68px;transform-origin:0 50%;transform:rotate(0.03deg) scaleX(0.858);">VT10376</div>
<div class="cell" style="left:129.7px;width:107.6px;top:330.42px;text-align:left;box-sizing:border-box;padding-left:2.6px;transform-origin:0 50%;transform:rotate(0.03deg) scaleX(0.885);">Đất san lấp</div>
<div class="cell" style="left:237.3px;width:77.3px;top:330.42px;text-align:center;box-sizing:border-box;transform-origin:50% 50%;transform:rotate(0.03deg) scaleX(0.885);">Đất</div>
<div class="cell" style="left:314.6px;width:104.2px;top:330.42px;text-align:right;box-sizing:border-box;padding-right:3.5px;transform-origin:100% 50%;transform:rotate(0.03deg) scaleX(0.858);">21.069,80</div>
<div class="cell" style="left:418.8px;width:104.4px;top:330.42px;text-align:right;box-sizing:border-box;padding-right:2.68px;transform-origin:100% 50%;transform:rotate(0.03deg) scaleX(0.858);">599.214.839</div>
<div class="cell" style="left:523.2px;width:54.6px;top:330.42px;text-align:right;box-sizing:border-box;padding-right:2.68px;font-size:11.6px;padding-right:2.8px;top:331.12px;-webkit-text-stroke:0.1px #111;transform-origin:100% 50%;transform:rotate(0.03deg) scaleX(0.93);">376</div>
<div class="cell" style="left:21.5px;width:38.8px;top:347.26px;text-align:center;box-sizing:border-box;transform-origin:50% 50%;transform:rotate(0.03deg) scaleX(0.858);">10</div>
<div class="cell" style="left:60.3px;width:69.4px;top:347.26px;text-align:left;box-sizing:border-box;padding-left:2.68px;transform-origin:0 50%;transform:rotate(0.03deg) scaleX(0.858);">VT10377</div>
<div class="cell" style="left:129.7px;width:107.6px;top:347.26px;text-align:left;box-sizing:border-box;padding-left:2.6px;transform-origin:0 50%;transform:rotate(0.03deg) scaleX(0.885);">Đá 0x25</div>
<div class="cell" style="left:237.3px;width:77.3px;top:347.26px;text-align:center;box-sizing:border-box;transform-origin:50% 50%;transform:rotate(0.03deg) scaleX(0.885);">Bột đá</div>
<div class="cell" style="left:314.6px;width:104.2px;top:347.26px;text-align:right;box-sizing:border-box;padding-right:3.5px;transform-origin:100% 50%;transform:rotate(0.03deg) scaleX(0.858);">11,10</div>
<div class="cell" style="left:418.8px;width:104.4px;top:347.26px;text-align:right;box-sizing:border-box;padding-right:2.68px;transform-origin:100% 50%;transform:rotate(0.03deg) scaleX(0.858);">1.412.727</div>
<div class="cell" style="left:523.2px;width:54.6px;top:347.26px;text-align:right;box-sizing:border-box;padding-right:2.68px;font-size:11.6px;padding-right:2.8px;top:347.96px;-webkit-text-stroke:0.1px #111;transform-origin:100% 50%;transform:rotate(0.03deg) scaleX(0.93);">377</div>
</div>
</body></html>
